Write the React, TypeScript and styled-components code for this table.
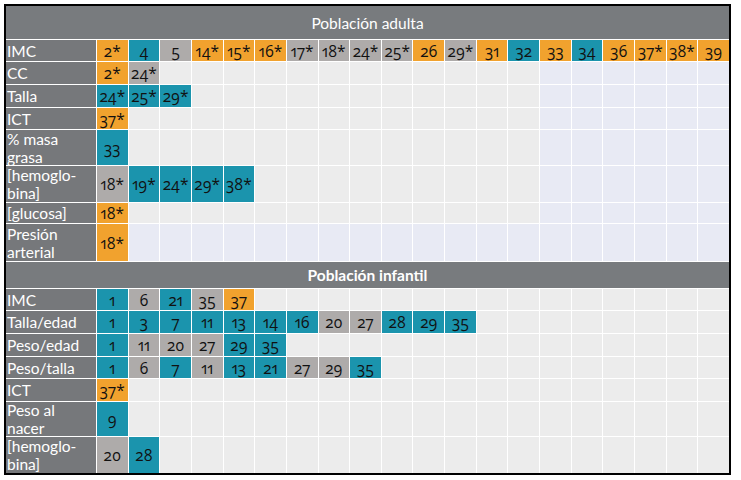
import React from 'react';
import styled, { createGlobalStyle } from 'styled-components';

type Tone = 'o' | 't' | 'g';
type Entry = [string, Tone];

interface RowData {
  label: string;
  h: number;
  cells: Entry[];
  tint?: boolean;
}

const COLS = 20;
const TINT_FROM = 14;

const GlobalStyle = createGlobalStyle`
  html, body {
    margin: 0;
    padding: 0;
    background: #ffffff;
  }
  body {
    padding: 4px;
    font-family: Lato, "Open Sans", sans-serif;
  }
`;

const Frame = styled.div`
  width: 723px;
  border: 2px solid #000;
  background: #ffffff;
  display: flex;
  flex-direction: column;
  gap: 1px;
`;

const SectionHeader = styled.div<{ $h: number; $bold?: boolean }>`
  height: ${(p) => p.$h}px;
  background: #787b7e;
  color: #ffffff;
  display: flex;
  align-items: center;
  justify-content: center;
  font-size: 15.5px;
  font-weight: ${(p) => (p.$bold ? 700 : 400)};
`;

const Row = styled.div<{ $h: number }>`
  height: ${(p) => p.$h}px;
  display: grid;
  grid-template-columns: 90px repeat(${COLS}, 1fr);
  grid-template-rows: minmax(0, 1fr);
  gap: 1px;
`;

const Label = styled.div`
  background: #76787b;
  color: #ffffff;
  font-size: 15.5px;
  line-height: 18px;
  padding-left: 1px;
  display: flex;
  align-items: center;
  overflow: hidden;
  white-space: pre-line;
`;

const toneColor: Record<string, string> = {
  o: '#f1a22e',
  t: '#1b94ad',
  g: '#aeabaa',
  empty: '#ececec',
  tint: '#e8eaf4',
};

const Cell = styled.div<{ $tone: string }>`
  background: ${(p) => toneColor[p.$tone]};
  color: #111111;
  font-family: "Open Sans", sans-serif;
  font-variant-numeric: oldstyle-nums proportional-nums;
  font-size: 15.5px;
  line-height: 18px;
  display: flex;
  align-items: center;
  justify-content: center;
  overflow: hidden;
`;

const adult: RowData[] = [
  {
    label: 'IMC',
    h: 21,
    cells: [
      ['2*', 'o'], ['4', 't'], ['5', 'g'], ['14*', 'o'], ['15*', 'o'],
      ['16*', 'o'], ['17*', 'g'], ['18*', 'g'], ['24*', 'g'], ['25*', 'g'],
      ['26', 'o'], ['29*', 'g'], ['31', 'o'], ['32', 't'], ['33', 'o'],
      ['34', 't'], ['36', 'o'], ['37*', 'o'], ['38*', 'o'], ['39', 'o'],
    ],
  },
  { label: 'CC', h: 22, cells: [['2*', 'o'], ['24*', 'g']] },
  { label: 'Talla', h: 22, cells: [['24*', 't'], ['25*', 't'], ['29*', 't']] },
  { label: 'ICT', h: 21, cells: [['37*', 'o']] },
  { label: '% masa\ngrasa', h: 35, cells: [['33', 't']] },
  {
    label: '[hemoglo-\nbina]',
    h: 36,
    cells: [['18*', 'g'], ['19*', 't'], ['24*', 't'], ['29*', 't'], ['38*', 't']],
  },
  { label: '[glucosa]', h: 20, cells: [['18*', 'o']] },
  { label: 'Presión\narterial', h: 37, cells: [['18*', 'o']], tint: true },
];

const infant: RowData[] = [
  { label: 'IMC', h: 21, cells: [['1', 't'], ['6', 'g'], ['21', 't'], ['35', 'g'], ['37', 'o']] },
  {
    label: 'Talla/edad',
    h: 22,
    cells: [
      ['1', 't'], ['3', 't'], ['7', 't'], ['11', 't'], ['13', 't'], ['14', 't'],
      ['16', 't'], ['20', 'g'], ['27', 'g'], ['28', 't'], ['29', 't'], ['35', 't'],
    ],
  },
  {
    label: 'Peso/edad',
    h: 22,
    cells: [['1', 't'], ['11', 'g'], ['20', 'g'], ['27', 'g'], ['29', 't'], ['35', 't']],
  },
  {
    label: 'Peso/talla',
    h: 21,
    cells: [
      ['1', 't'], ['6', 'g'], ['7', 't'], ['11', 'g'], ['13', 't'],
      ['21', 't'], ['27', 'g'], ['29', 'g'], ['35', 't'],
    ],
  },
  { label: 'ICT', h: 22, cells: [['37*', 'o']] },
  { label: 'Peso al\nnacer', h: 34, cells: [['9', 't']] },
  { label: '[hemoglo-\nbina]', h: 36, cells: [['20', 'g'], ['28', 't']] },
];

const TableRow = ({ row, tintTail }: { row: RowData; tintTail: boolean }) => {
  const slots = Array.from({ length: COLS }, (_, i) => {
    const entry = row.cells[i];
    if (entry) {
      return (
        <Cell key={i} $tone={entry[1]}>
          {entry[0]}
        </Cell>
      );
    }
    const blank = row.tint || (tintTail && i >= TINT_FROM) ? 'tint' : 'empty';
    return <Cell key={i} $tone={blank} />;
  });
  return (
    <Row $h={row.h}>
      <Label>{row.label}</Label>
      {slots}
    </Row>
  );
};

export default function App() {
  return (
    <>
      <GlobalStyle />
      <Frame>
        <SectionHeader $h={33}>Población adulta</SectionHeader>
        {adult.map((r, i) => (
          <TableRow key={`a${i}`} row={r} tintTail />
        ))}
        <SectionHeader $h={26} $bold>
          Población infantil
        </SectionHeader>
        {infant.map((r, i) => (
          <TableRow key={`i${i}`} row={r} tintTail={false} />
        ))}
      </Frame>
    </>
  );
}
